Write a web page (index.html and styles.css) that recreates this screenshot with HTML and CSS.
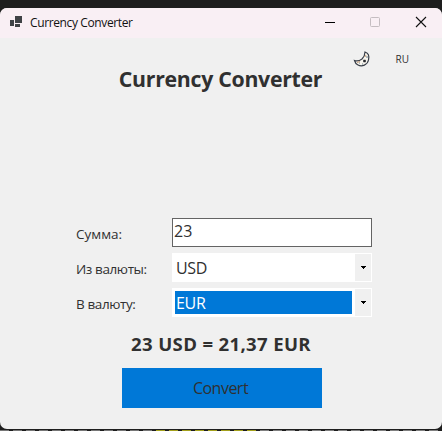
FILE: index.html
```html
<!DOCTYPE html>
<html lang="ru">
<head>
<meta charset="utf-8">
<title>Currency Converter</title>
<link rel="stylesheet" href="styles.css">
</head>
<body>
<div class="window">
  <header class="titlebar">
    <svg class="app-icon" width="12" height="11" viewBox="0 0 12 11" fill="#3f4245"><path d="M0 4h4v6H0zM5 0h7v7H5zM5 8h5v3H5z"/></svg>
    <span class="caption">Currency Converter</span>
    <svg class="controls" width="112" height="30" viewBox="0 0 112 30" fill="none"><path d="M5 14.5h10" stroke="#000"/><rect x="50.5" y="9.5" width="9" height="9" rx="1" stroke="#c5bdc1"/><path d="M96 9l10 10M106 9l-10 10" stroke="#111" stroke-width="1.1"/></svg>
  </header>
  <div class="tools">
    <svg class="moon" width="18" height="18" viewBox="0 0 18 18"><path d="M12 2C15 3 16.500 6 15.500 10C14.500 15 9 17 5 15C3 14 2 12.500 1.500 10.500C4 11.500 7 10.500 9 9C11 7 12 5 12 2Z" fill="#f8f5ee" stroke="#383e48" stroke-width="1.2"/><path d="M10.500 10h2v2h-2z" fill="#222" stroke="#343840" stroke-width=".6"/><path d="M6 13h1M9 14h1M14 6v2" stroke="#6a8090"/><path d="M4 12.500l3-1M12 7l1-2" stroke="#c49a74"/></svg>
    <span class="lang">RU</span>
  </div>
  <h1><span>Currency Converter</span></h1>
  <form class="fields">
    <label>Сумма:</label><div class="amount">23</div>
    <label class="tight">Из валюты:</label>
    <div class="combo"><span class="value">USD</span><span class="drop"><svg width="5" height="3" viewBox="0 0 5 3" shape-rendering="crispEdges"><path d="M0 0h5v1H4v1H3v1H2V2H1V1H0z"/></svg></span></div>
    <label class="tight">В валюту:</label>
    <div class="combo focused"><span class="value">EUR</span><span class="drop"><svg width="5" height="3" viewBox="0 0 5 3" shape-rendering="crispEdges"><path d="M0 0h5v1H4v1H3v1H2V2H1V1H0z"/></svg></span></div>
  </form>
  <div class="result">23 USD = 21,37 EUR</div>
  <button class="convert" type="button">Convert</button>
</div>
<div class="backdrop"></div>
</body>
</html>
```
FILE: styles.css
```css
* { box-sizing: border-box; }
body {
  margin: 0;
  height: 431px;
  padding-top: 8px;
  overflow: hidden;
  background: #1e1e1e;
  color: #303030;
  font-family: "Open Sans", "Noto Sans", sans-serif;
}
.window {
  height: 421px;
  border-radius: 7px;
  overflow: hidden;
  background: #f0f0f0;
}
.backdrop {
  height: 1px;
  margin-top: 1px;
  background:
    repeating-linear-gradient(90deg, transparent 0 9px, #1e1e1e 9px 13px),
    linear-gradient(90deg, #777 0 155px, #a3a01c 155px 257px, #808080 257px);
}
.titlebar {
  height: 30px;
  display: flex;
  align-items: center;
  padding-left: 10px;
  background: #f9eff4;
  color: #111;
}
.app-icon { margin-top: -3px; }
.caption {
  margin-left: 8px;
  font-size: 12px;
  line-height: 16px;
  letter-spacing: -0.38px;
  white-space: nowrap;
}
.controls { margin-left: auto; margin-right: 10px; }
.tools {
  height: 27px;
  display: flex;
  padding: 12px 33px 0 0;
  justify-content: flex-end;
}
.moon { flex: none; }
.lang {
  margin-left: 25px;
  font-size: 10px;
  line-height: 18px;
  font-weight: 500;
}
h1 {
  margin: 0;
  height: 28px;
  padding-right: 1px;
  font-size: 21.3px;
  line-height: 28px;
  font-weight: 700;
  letter-spacing: -0.3px;
  text-align: center;
  white-space: nowrap;
}
.fields {
  display: grid;
  grid-template-columns: 96px 200px;
  grid-auto-rows: 29px;
  row-gap: 6px;
  margin: 125px 0 0 76px;
}
label {
  padding-top: 2px;
  font-size: 13.5px;
  line-height: 29px;
  white-space: nowrap;
}
.tight { letter-spacing: -0.4px; }
.amount {
  border: 1px solid #646464;
  background: #fff;
  padding-left: 1px;
  font-size: 16px;
  line-height: 25px;
}
.combo {
  display: flex;
  padding: 1px;
  background: #fff;
  font-size: 16px;
  letter-spacing: -0.3px;
}
.value {
  flex: 1;
  padding-left: 3px;
  line-height: 28px;
}
.drop {
  width: 16px;
  display: flex;
  align-items: center;
  justify-content: center;
  background: #f0f0f0;
}
.focused .value {
  margin: 2px 3px 2px 2px;
  padding-left: 1px;
  line-height: 24px;
  background: #0078d7;
  color: #fff;
}
.result {
  height: 51px;
  font-size: 18.6px;
  line-height: 54px;
  font-weight: 700;
  letter-spacing: 0.33px;
  text-align: center;
  white-space: nowrap;
}
.convert {
  display: block;
  width: 200px;
  height: 40px;
  margin: 0 0 0 122px;
  padding: 0 3px 0 0;
  border: 0;
  background: #0078d7;
  color: #303030;
  font: 16px/40px "Open Sans", sans-serif;
  letter-spacing: -0.5px;
}
```
